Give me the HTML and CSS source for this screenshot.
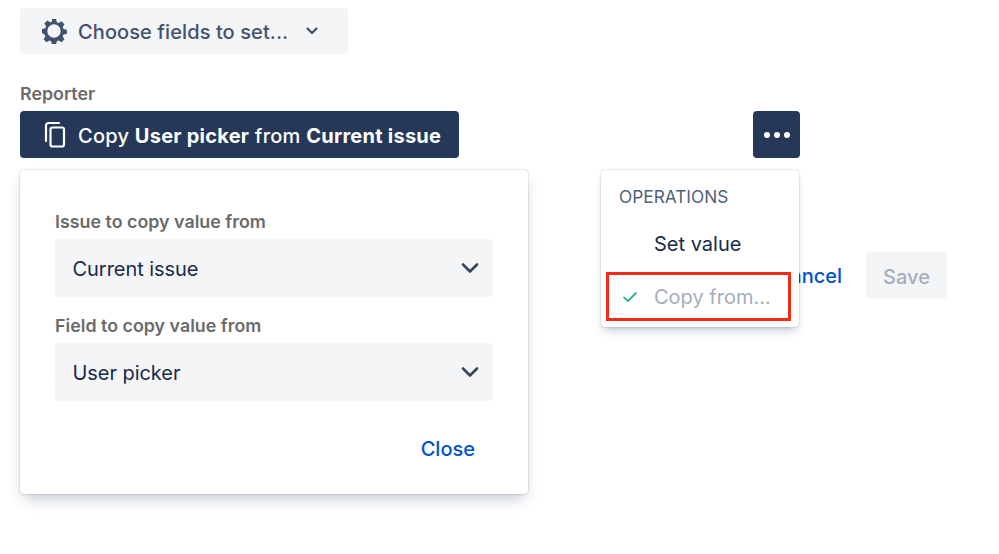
FILE: index.html
```html
<!DOCTYPE html>
<html lang="en">
<head>
<meta charset="utf-8">
<title>Set fields</title>
<link rel="stylesheet" href="styles.css">
</head>
<body>
<main class="page">
  <button class="choose" type="button">
    <svg class="gear" viewBox="0 0 26 26" width="26" height="26" aria-hidden="true">
      <path fill="#42526e" fill-rule="evenodd" d="M10.9 1h4.2l.7 3.3 1.9.8 2.8-1.8 3 3-1.8 2.8.8 1.9 3.3.7v4.2l-3.3.7-.8 1.9 1.8 2.8-3 3-2.8-1.8-1.9.8-.7 3.3h-4.2l-.7-3.3-1.9-.8-2.8 1.8-3-3 1.8-2.8-.8-1.9L1 15.1v-4.2l3.300-.7.8-1.9-1.800-2.800 3-3 2.800 1.800 1.900-.8zM13 6.300a6.700 6.700 0 1 0 0 13.400 6.700 6.700 0 0 0 0-13.400z"/>
    </svg>
    <span class="choose-label">Choose fields to set...</span>
    <svg class="choose-caret" viewBox="0 0 12 8" width="12" height="8" aria-hidden="true">
      <path d="M1.500 1.500 6 6l4.500-4.500" fill="none" stroke="#42526e" stroke-width="2.200" stroke-linecap="round" stroke-linejoin="round"/>
    </svg>
  </button>

  <section class="field">
    <div class="label">Reporter</div>
    <div class="field-row">
      <button class="dark copy" type="button">
        <svg viewBox="0 0 24 28" width="24" height="28" aria-hidden="true">
          <path d="M3 20V4.500A2.500 2.500 0 0 1 5.500 2H16" fill="none" stroke="#fff" stroke-width="2.200" stroke-linecap="round"/>
          <rect x="7.500" y="6.500" width="13.500" height="19" rx="2" fill="none" stroke="#fff" stroke-width="2.200"/>
        </svg>
        <span class="copy-text">Copy <b>User picker</b> from <b>Current issue</b></span>
      </button>
      <button class="dark more" type="button" aria-label="More">
        <i></i><i></i><i></i>
      </button>
    </div>
  </section>

  <footer class="actions">
    <a class="link" href="#">Cancel</a>
    <button class="save" type="button">Save</button>
  </footer>

  <div class="panel">
    <div class="label">Issue to copy value from</div>
    <div class="select">
      <span>Current issue</span>
      <svg viewBox="0 0 18 12" width="18" height="12" aria-hidden="true"><path d="M2 2.500 9 9.500l7-7" fill="none" stroke="#344563" stroke-width="2.600" stroke-linecap="round" stroke-linejoin="round"/></svg>
    </div>
    <div class="label second">Field to copy value from</div>
    <div class="select">
      <span>User picker</span>
      <svg viewBox="0 0 18 12" width="18" height="12" aria-hidden="true"><path d="M2 2.500 9 9.500l7-7" fill="none" stroke="#344563" stroke-width="2.600" stroke-linecap="round" stroke-linejoin="round"/></svg>
    </div>
    <div class="panel-foot"><a class="link" href="#">Close</a></div>
  </div>

  <div class="menu">
    <div class="menu-title">OPERATIONS</div>
    <div class="menu-item">Set value</div>
    <div class="menu-item disabled">
      <svg viewBox="0 0 16 12" width="16" height="12" aria-hidden="true"><path d="M2 6.500 6 10l8-8" fill="none" stroke="#36b37e" stroke-width="1.800" stroke-linecap="round" stroke-linejoin="round"/></svg>
      Copy from...
    </div>
    <div class="highlight"></div>
  </div>
</main>
</body>
</html>
```
FILE: styles.css
```css
* { box-sizing: border-box; }
html, body { margin: 0; background: #fff; }
body {
  font-family: Inter, "Liberation Sans", sans-serif;
  font-size: 20px;
  color: #172b4d;
}
.page {
  position: relative;
  width: 999px;
  height: 554px;
  padding: 8px 52px 0 20px;
  overflow: hidden;
}
button { font: inherit; border: 0; padding: 0; }
.choose {
  display: flex;
  align-items: center;
  width: 328px;
  height: 46px;
  padding-left: 21px;
  background: #f4f5f7;
  border-radius: 4px;
  color: #42526e;
  font-weight: 500;
}
.choose-label { margin-left: 11px; padding-top: 2px; letter-spacing: .09px; }
.choose-caret { margin-left: 18px; }
.field { margin-top: 30px; width: 780px; }
.label {
  font-size: 17.850px;
  font-weight: 600;
  line-height: 20px;
  color: #6b6b6b;
}
.field-row {
  display: flex;
  justify-content: space-between;
  margin-top: 7px;
}
.dark {
  display: flex;
  align-items: center;
  height: 47px;
  background: #253858;
  border-radius: 4px;
  color: #fff;
}
.copy { width: 439px; padding-left: 23px; gap: 11px; font-weight: 500; }
.copy-text { padding-top: 2px; letter-spacing: .25px; }
.copy b { font-weight: 700; }
.more { width: 47px; justify-content: center; gap: 4px; }
.more i { width: 6px; height: 6px; border-radius: 50%; background: #fff; }
.actions {
  display: flex;
  justify-content: flex-end;
  align-items: center;
  gap: 24px;
  margin-top: 94px;
}
.link { color: #0052cc; text-decoration: none; font-weight: 500; }
.save {
  width: 81px;
  height: 47px;
  padding-top: 2px;
  background: #f4f5f7;
  border-radius: 4px;
  color: #a5adba;
  font-weight: 500;
}
.panel {
  position: absolute;
  left: 20px;
  top: 170px;
  width: 508px;
  height: 324px;
  padding: 42px 35px 0;
  background: #fff;
  border-radius: 4px;
  box-shadow: 0 8px 14px -4px rgba(9, 30, 66, .25), 0 0 2px rgba(9, 30, 66, .32);
}
.select {
  display: flex;
  align-items: center;
  justify-content: space-between;
  height: 58px;
  margin-top: 7px;
  padding: 0 14px 0 18px;
  background: #f4f5f7;
  border-radius: 4px;
}
.select span { padding-top: 2px; margin-left: -.5px; letter-spacing: -.05px; }
.label.second { margin-top: 19px; }
.panel-foot { display: flex; justify-content: flex-end; margin-top: 36px; padding-right: 18px; }
.menu {
  position: absolute;
  left: 601px;
  top: 170px;
  width: 198px;
  height: 157px;
  background: #fff;
  border-radius: 4px;
  box-shadow: 0 6px 10px -3px rgba(9, 30, 66, .25), 0 0 2px rgba(9, 30, 66, .32);
}
.menu-title {
  padding: 16px 0 0 18px;
  font-size: 17.300px;
  line-height: 22px;
  font-weight: 400;
  color: #505f79;
}
.menu-item {
  position: relative;
  height: 52px;
  padding-left: 53px;
  line-height: 52px;
}
.menu-item:nth-child(2) { margin-top: 10px; height: 53px; }
.menu-item.disabled { color: #a5adba; }
.menu-item svg { position: absolute; left: 21px; top: 20px; }
.highlight {
  position: absolute;
  left: 5px;
  top: 102px;
  width: 185px;
  height: 49px;
  border: 3px solid #f42a12;
}
```
